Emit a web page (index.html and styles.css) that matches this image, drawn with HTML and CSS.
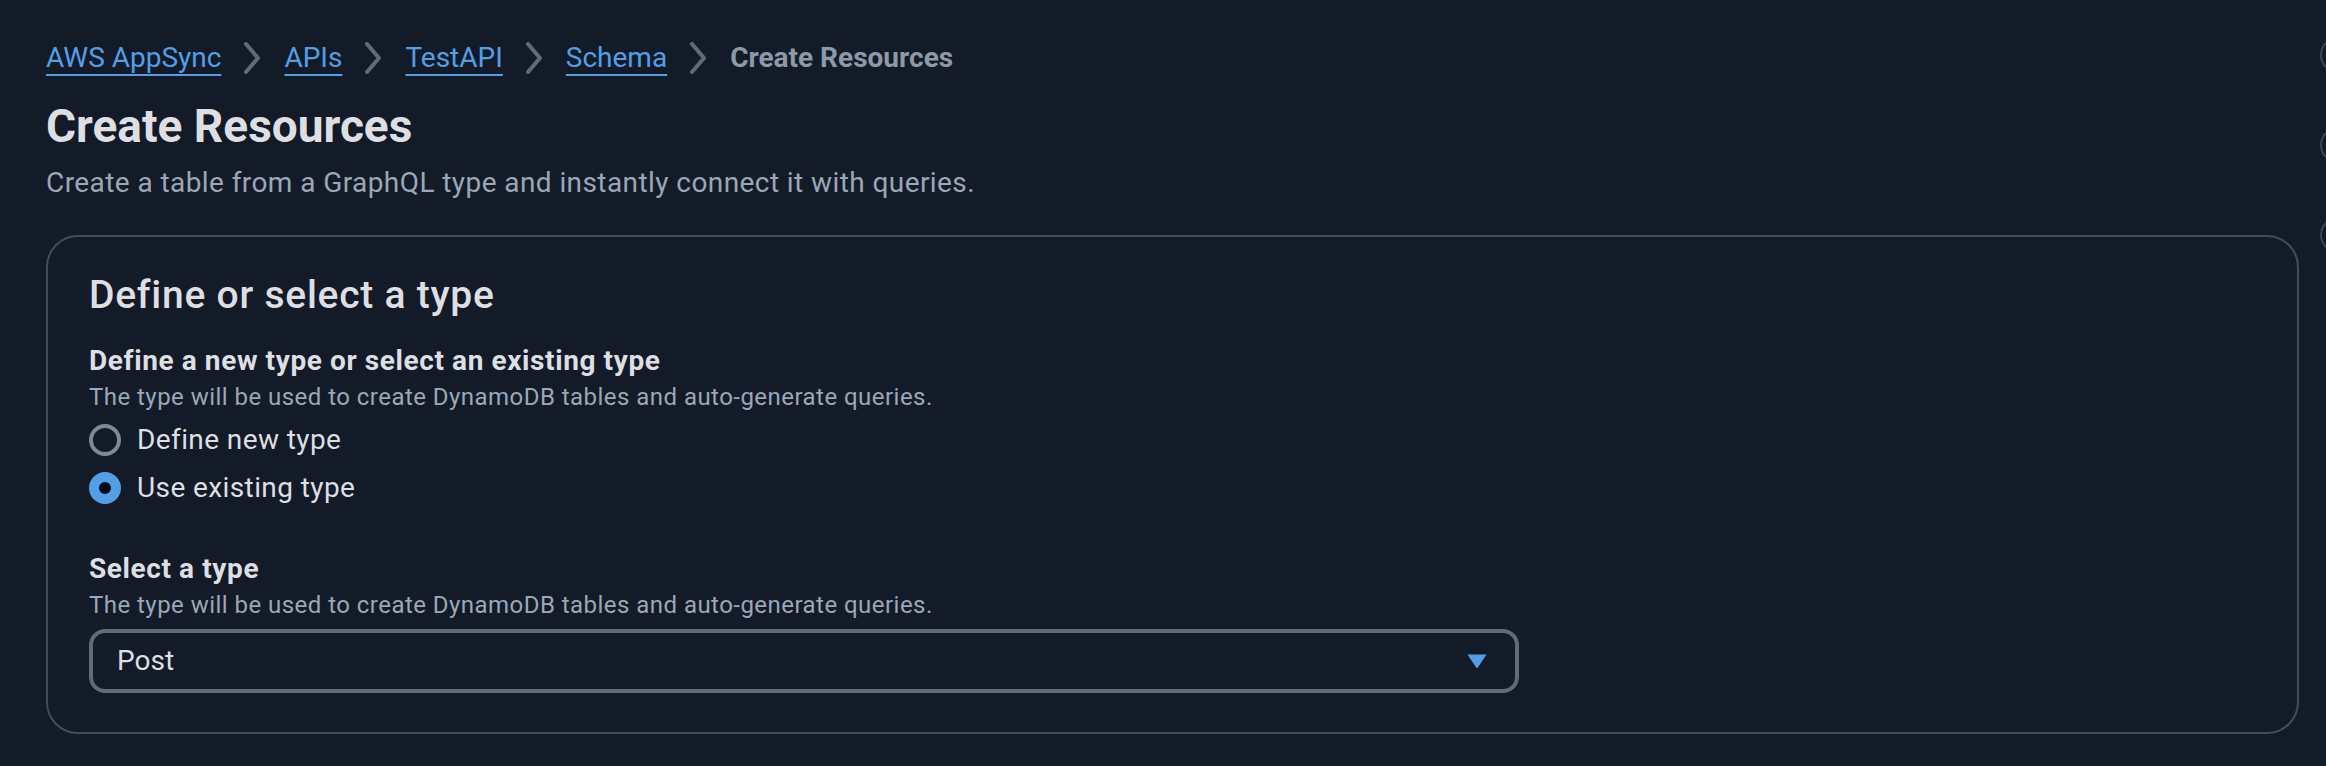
FILE: index.html
```html
<!DOCTYPE html>
<html lang="en">
<head>
<meta charset="utf-8">
<title>Create Resources</title>
<link rel="stylesheet" href="styles.css">
</head>
<body>
<div class="page">
  <nav class="breadcrumbs">
    <a class="crumb-link" href="#">AWS AppSync</a>
    <svg class="chev" viewBox="0 0 32 32"><polyline points="10,2 22,16 10,30"/></svg>
    <a class="crumb-link" href="#">APIs</a>
    <svg class="chev" viewBox="0 0 32 32"><polyline points="10,2 22,16 10,30"/></svg>
    <a class="crumb-link" href="#">TestAPI</a>
    <svg class="chev" viewBox="0 0 32 32"><polyline points="10,2 22,16 10,30"/></svg>
    <a class="crumb-link" href="#">Schema</a>
    <svg class="chev" viewBox="0 0 32 32"><polyline points="10,2 22,16 10,30"/></svg>
    <span class="crumb-current">Create Resources</span>
  </nav>

  <h1 class="page-title">Create Resources</h1>
  <p class="page-desc">Create a table from a GraphQL type and instantly connect it with queries.</p>

  <section class="card">
    <h2 class="card-title">Define or select a type</h2>

    <div class="field">
      <div class="field-label">Define a new type or select an existing type</div>
      <div class="field-desc">The type will be used to create DynamoDB tables and auto-generate queries.</div>
      <div class="radios">
        <label class="radio-row"><span class="radio"></span><span class="radio-text">Define new type</span></label>
        <label class="radio-row"><span class="radio radio-on"></span><span class="radio-text">Use existing type</span></label>
      </div>
    </div>

    <div class="field field-select">
      <div class="field-label">Select a type</div>
      <div class="field-desc">The type will be used to create DynamoDB tables and auto-generate queries.</div>
      <div class="select">
        <span class="select-value">Post</span>
        <svg class="caret" viewBox="0 0 22 16"><path d="M1.5 1.5 H20.5 L11.8 14.5 Q11 15.5 10.2 14.5 Z"/></svg>
      </div>
    </div>
  </section>
</div>

<div class="edge-rail">
  <span class="edge-dot"></span>
  <span class="edge-dot"></span>
  <span class="edge-dot"></span>
</div>
</body>
</html>
```

FILE: styles.css
```css
html, body {
  margin: 0;
  padding: 0;
  background: #131b29;
  overflow: hidden;
}

body {
  font-family: Roboto, "Noto Sans", sans-serif;
  color: #dedfe3;
  position: relative;
  min-height: 766px;
}

.page {
  padding: 38px 27px 0 46px;
  display: flex;
  flex-direction: column;
}

.breadcrumbs {
  display: flex;
  align-items: center;
  height: 40px;
  font-size: 28px;
  line-height: 40px;
}

.crumb-link {
  color: #539fe5;
  text-decoration: underline;
  text-decoration-thickness: 2px;
  text-underline-offset: 7px;
}

.chev {
  width: 32px;
  height: 32px;
  margin: 0 16px 0 15px;
  fill: none;
  stroke: #5f6b7a;
  stroke-width: 4;
  stroke-linecap: round;
  stroke-linejoin: round;
}

.crumb-current {
  color: #8d99a8;
  font-weight: 700;
}

.page-title {
  margin: 20px 0 0;
  font-size: 46px;
  line-height: 56px;
  font-weight: 700;
  color: #dedfe3;
}

.page-desc {
  margin: 9px 0 0;
  font-size: 28px;
  line-height: 40px;
  letter-spacing: 0.42px;
  color: #9ba7b6;
}

.card {
  margin-top: 32px;
  border: 2px solid #414d5c;
  border-radius: 32px;
  padding: 36px 40px 39px 41px;
  display: flex;
  flex-direction: column;
}

.card-title {
  margin: 0;
  font-size: 39px;
  line-height: 44px;
  font-weight: 500;
  letter-spacing: 0.75px;
  color: #dedfe3;
}

.field {
  margin-top: 24px;
  display: flex;
  flex-direction: column;
}

.field-select {
  margin-top: 41px;
}

.field-label {
  font-size: 28px;
  line-height: 40px;
  font-weight: 700;
  letter-spacing: 0.6px;
  color: #dedfe3;
}

.field-desc {
  font-size: 24px;
  line-height: 32px;
  letter-spacing: 0.46px;
  color: #9ba7b6;
}

.radios {
  margin-top: 7px;
  display: flex;
  flex-direction: column;
  gap: 8px;
}

.radio-row {
  display: flex;
  align-items: center;
  gap: 16px;
  height: 40px;
  font-size: 28px;
  line-height: 40px;
  letter-spacing: 0.4px;
  color: #dedfe3;
}

.radio {
  width: 32px;
  height: 32px;
  box-sizing: border-box;
  border-radius: 50%;
  border: 4px solid #7d8998;
  flex: none;
}

.radio-on {
  border: 10px solid #539fe5;
  background: #000716;
}

.select {
  margin-top: 8px;
  width: 1430px;
  height: 64px;
  box-sizing: border-box;
  border: 4px solid #5f6b7a;
  border-radius: 16px;
  display: flex;
  align-items: center;
  justify-content: space-between;
  padding: 0 27px 0 24px;
}

.select-value {
  font-size: 28px;
  line-height: 40px;
  color: #dedfe3;
}

.caret {
  width: 22px;
  height: 16px;
  fill: #539fe5;
}

.edge-rail {
  position: absolute;
  top: 37px;
  right: -30px;
  display: flex;
  flex-direction: column;
  gap: 54px;
}

.edge-dot {
  width: 32px;
  height: 32px;
  border-radius: 50%;
  border: 2px solid #3b4655;
}
```
